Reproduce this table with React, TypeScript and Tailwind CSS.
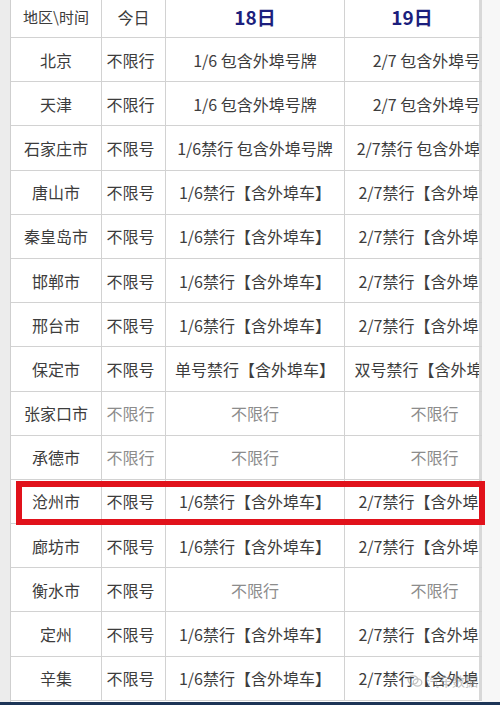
import React from "react";

type Row = {
  city: string;
  today: string;
  d18: string;
  d19: string;
  muted?: boolean;
  todayMuted?: boolean;
};

const rows: Row[] = [
  { city: "北京", today: "不限行", d18: "1/6 包含外埠号牌", d19: "2/7 包含外埠号牌" },
  { city: "天津", today: "不限行", d18: "1/6 包含外埠号牌", d19: "2/7 包含外埠号牌" },
  { city: "石家庄市", today: "不限号", d18: "1/6禁行 包含外埠号牌", d19: "2/7禁行 包含外埠号牌" },
  { city: "唐山市", today: "不限号", d18: "1/6禁行【含外埠车】", d19: "2/7禁行【含外埠车】" },
  { city: "秦皇岛市", today: "不限号", d18: "1/6禁行【含外埠车】", d19: "2/7禁行【含外埠车】" },
  { city: "邯郸市", today: "不限号", d18: "1/6禁行【含外埠车】", d19: "2/7禁行【含外埠车】" },
  { city: "邢台市", today: "不限号", d18: "1/6禁行【含外埠车】", d19: "2/7禁行【含外埠车】" },
  { city: "保定市", today: "不限号", d18: "单号禁行【含外埠车】", d19: "双号禁行【含外埠车】" },
  { city: "张家口市", today: "不限行", d18: "不限行", d19: "不限行", muted: true, todayMuted: true },
  { city: "承德市", today: "不限行", d18: "不限行", d19: "不限行", muted: true, todayMuted: true },
  { city: "沧州市", today: "不限号", d18: "1/6禁行【含外埠车】", d19: "2/7禁行【含外埠车】" },
  { city: "廊坊市", today: "不限号", d18: "1/6禁行【含外埠车】", d19: "2/7禁行【含外埠车】" },
  { city: "衡水市", today: "不限号", d18: "不限行", d19: "不限行", muted: true },
  { city: "定州", today: "不限号", d18: "1/6禁行【含外埠车】", d19: "2/7禁行【含外埠车】" },
  { city: "辛集", today: "不限号", d18: "1/6禁行【含外埠车】", d19: "2/7禁行【含外埠车】" },
];

const font = { fontFamily: '"Noto Sans CJK SC", "Noto Sans", sans-serif' };

export default function App() {
  return (
    <div className="w-[500px] h-[705px] flex flex-col bg-white overflow-hidden" style={font}>
      <div className="flex h-[702px]">
        {/* left gutter */}
        <div className="w-[11px] bg-[#ececec] border-r border-[#cfcfcf]" />

        {/* table */}
        <div className="relative w-[471px] flex flex-col">
          {/* header */}
          <div className="flex h-[38px] border-b border-[#d2d2d2] text-[#3b3b3b]">
            <div className="w-[91px] border-r border-[#d2d2d2] flex items-center justify-center text-[15px] pb-[3px]">
              地区\时间
            </div>
            <div className="w-[64px] border-r border-[#d2d2d2] flex items-center justify-center text-[16px] pb-[3px]">
              今日
            </div>
            <div className="w-[179px] border-r border-[#d2d2d2] flex items-center justify-center text-[19px] font-bold text-[#1c1f7d] pb-[3px]">
              18日
            </div>
            <div className="w-[137px] border-r-[3px] border-[#d8d8d8] flex items-center justify-center text-[19px] font-bold text-[#1c1f7d] pb-[3px]">
              19日
            </div>
          </div>

          {rows.map((r) => (
            <div key={r.city} className="flex h-[44.2px] border-b border-[#d2d2d2] text-[16px]">
              <div className="w-[91px] border-r border-[#d2d2d2] flex items-center justify-center text-[#3d3d3d]">
                {r.city}
              </div>
              <div
                className={
                  "w-[64px] border-r border-[#d2d2d2] flex items-center justify-center pr-[6px] " +
                  (r.todayMuted ? "text-[#8c8c8c]" : "text-[#3d3d3d]")
                }
              >
                {r.today}
              </div>
              <div
                className={
                  "w-[179px] border-r border-[#d2d2d2] flex items-center justify-center whitespace-nowrap " +
                  (r.muted ? "text-[#8c8c8c]" : "text-[#3d3d3d]")
                }
              >
                {r.d18}
              </div>
              <div className="w-[137px] border-r-[3px] border-[#d8d8d8] overflow-hidden">
                <div
                  className={
                    "w-[179px] h-full flex items-center justify-center whitespace-nowrap " +
                    (r.muted ? "text-[#8c8c8c]" : "text-[#3d3d3d]")
                  }
                >
                  {r.d19}
                </div>
              </div>
            </div>
          ))}

          {/* highlight around 沧州市 */}
          <div className="absolute left-[5px] top-[481px] w-[469px] h-[44px] border-[6px] border-[#e1121b]" />

          {/* watermark */}
          <div className="absolute left-[396px] top-[671px] flex items-center gap-[3px] text-[13px] text-[#9a9a9a] opacity-60">
            <svg width="16" height="14" viewBox="0 0 16 14" fill="none" stroke="#9a9a9a" strokeWidth="1.2">
              <ellipse cx="6" cy="6" rx="5" ry="4.2" />
              <ellipse cx="10.5" cy="8.5" rx="4.3" ry="3.6" />
            </svg>
            <span>汽车数据</span>
          </div>
        </div>

        {/* right gutter */}
        <div className="flex-1 bg-[#f7f7f7]" />
      </div>
      <div className="flex-1 bg-[#1d3557]" />
    </div>
  );
}
